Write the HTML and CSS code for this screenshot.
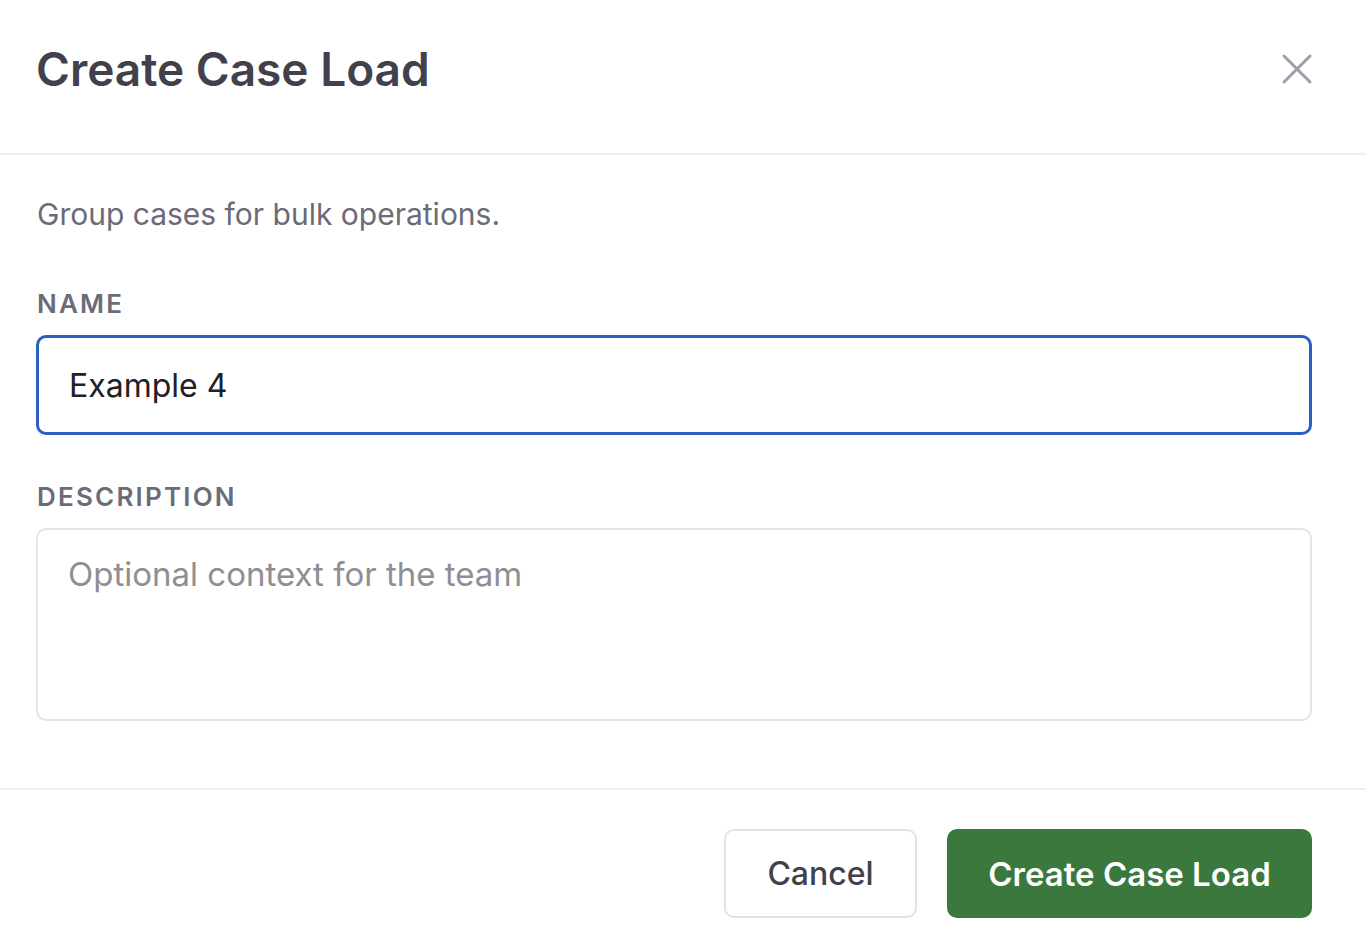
FILE: index.html
```html
<!DOCTYPE html>
<html>
<head>
   <meta charset="UTF-8">
   <title>Create Case Load</title>
   <link rel="stylesheet" href="styles.css">
</head>
<body>

<div class="dialog">
   <div class="dialog-header">
       <h2 class="dialog-title">Create Case Load</h2>
       <a href="javascript:;" class="close-btn" title="Close">
           <svg width="32" height="32" viewBox="0 0 32 32">
               <path d="M3 3L29 29M29 3L3 29" stroke="#9d9ca8" stroke-width="3" stroke-linecap="round" fill="none"/>
           </svg>
       </a>
   </div>

   <div class="dialog-body">
       <p class="intro">Group cases for bulk operations.</p>

       <label class="field-label" for="name">NAME</label>
       <input id="name" class="field-input" type="text" value="Example 4">

       <label class="field-label" for="desc">DESCRIPTION</label>
       <textarea id="desc" class="field-textarea" placeholder="Optional context for the team"></textarea>
   </div>

   <div class="dialog-footer">
       <button class="btn btn-cancel">Cancel</button>
       <button class="btn btn-primary">Create Case Load</button>
   </div>
</div>

</body>
</html>
```

FILE: styles.css
```css
* {
    margin: 0;
    padding: 0;
    box-sizing: border-box;
}

body {
    background: #fff;
    font-family: Inter, "Noto Sans", sans-serif;
    color: #41414d;
}

.dialog {
    width: 1366px;
}

.dialog-header {
    display: flex;
    align-items: center;
    justify-content: space-between;
    height: 155px;
    padding: 0 54px 16px 37px;
    border-bottom: 2px solid #efeff1;
}

.dialog-title {
    font-size: 46px;
    font-weight: 600;
    color: #41414d;
    line-height: 56px;
    margin-left: -1px;
}

.close-btn {
    display: block;
    width: 32px;
    height: 32px;
    margin-right: -1px;
}

.dialog-body {
    padding: 37px 54px 67px 36px;
}

.intro {
    font-size: 30px;
    line-height: 45px;
    color: #6b6b78;
    margin-bottom: 49px;
    padding-left: 1px;
}

.field-label {
    display: block;
    font-size: 26px;
    font-weight: 600;
    letter-spacing: 2.2px;
    color: #6b6b7a;
    line-height: 36px;
    margin-bottom: 13px;
    padding-left: 1px;
}

.field-input,
.field-textarea {
    display: block;
    width: 100%;
    font-family: Inter, "Noto Sans", sans-serif;
    color: #202026;
    background: #fff;
    border-radius: 10px;
    outline: none;
}

.field-input {
    height: 100px;
    padding: 0 30px;
    font-size: 32px;
    border: 3px solid #2b5fc2;
    margin-bottom: 44px;
}

.field-textarea {
    height: 193px;
    padding: 20px 30px;
    font-size: 33px;
    border: 2px solid #e4e4e8;
    resize: none;
    line-height: 48px;
}

.field-textarea::placeholder {
    color: #8e8e93;
}

.dialog-footer {
    display: flex;
    justify-content: flex-end;
    gap: 30px;
    padding: 39px 54px 30px 36px;
    border-top: 2px solid #efeff1;
}

.btn {
    height: 89px;
    font-family: Inter, "Noto Sans", sans-serif;
    border-radius: 10px;
    cursor: pointer;
}

.btn-cancel {
    width: 193px;
    background: #fff;
    border: 2px solid #e3e3e7;
    color: #41414d;
    font-size: 32px;
    font-weight: 500;
}

.btn-primary {
    width: 365px;
    background: #3b783d;
    border: none;
    color: #fff;
    font-size: 33px;
    font-weight: 600;
}
```
